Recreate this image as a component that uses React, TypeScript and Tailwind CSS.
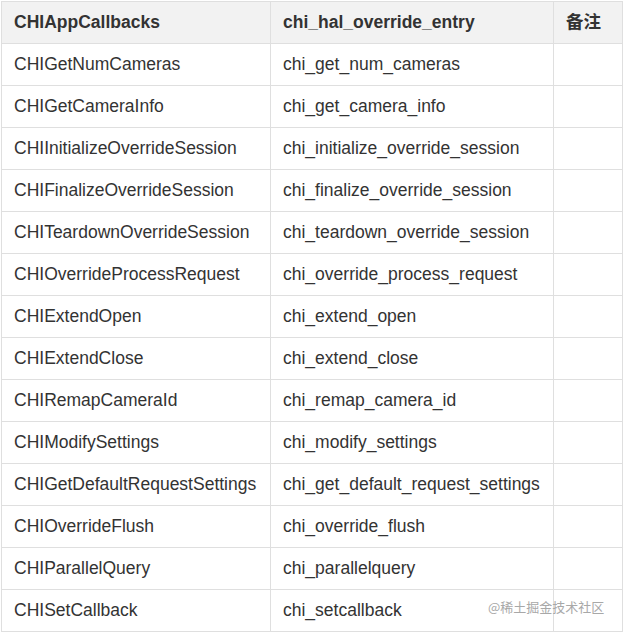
import React from 'react';

const rows: [string, string][] = [
  ['CHIGetNumCameras', 'chi_get_num_cameras'],
  ['CHIGetCameraInfo', 'chi_get_camera_info'],
  ['CHIInitializeOverrideSession', 'chi_initialize_override_session'],
  ['CHIFinalizeOverrideSession', 'chi_finalize_override_session'],
  ['CHITeardownOverrideSession', 'chi_teardown_override_session'],
  ['CHIOverrideProcessRequest', 'chi_override_process_request'],
  ['CHIExtendOpen', 'chi_extend_open'],
  ['CHIExtendClose', 'chi_extend_close'],
  ['CHIRemapCameraId', 'chi_remap_camera_id'],
  ['CHIModifySettings', 'chi_modify_settings'],
  ['CHIGetDefaultRequestSettings', 'chi_get_default_request_settings'],
  ['CHIOverrideFlush', 'chi_override_flush'],
  ['CHIParallelQuery', 'chi_parallelquery'],
  ['CHISetCallback', 'chi_setcallback'],
];

const cell = 'border border-[#dfdfdf] pl-[12px] pr-[10px] pb-[2px] h-[42px] align-middle';

export default function App() {
  return (
    <div className="w-[624px] h-[632px] bg-white pt-px pl-px relative">
      <table
        className="table-fixed border-collapse text-[17.5px] leading-[20px] text-[#333] font-['Liberation_Sans','Noto_Sans_CJK_SC',sans-serif]"
        style={{ width: 621 }}
      >
        <colgroup>
          <col className="w-[269px]" />
          <col className="w-[283px]" />
          <col className="w-[69px]" />
        </colgroup>
        <thead>
          <tr className="bg-[#f2f2f2]">
            <th className={cell + ' text-left font-bold'}>CHIAppCallbacks</th>
            <th className={cell + ' text-left font-bold'}>chi_hal_override_entry</th>
            <th className={cell + ' text-left font-bold'}>备注</th>
          </tr>
        </thead>
        <tbody>
          {rows.map(([a, b]) => (
            <tr key={a}>
              <td className={cell + ' whitespace-nowrap'}>{a}</td>
              <td className={cell + ' whitespace-nowrap'}>{b}</td>
              <td className={cell}></td>
            </tr>
          ))}
        </tbody>
      </table>
      {/* watermark */}
      <div className="absolute left-[488px] top-[600px] text-[13px] text-[#a8a8a8] font-['Noto_Sans_CJK_SC',sans-serif] leading-none">
        @稀土掘金技术社区
      </div>
    </div>
  );
}
